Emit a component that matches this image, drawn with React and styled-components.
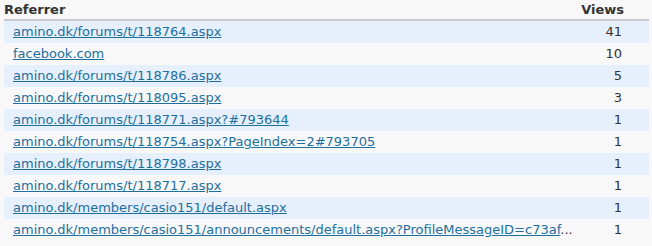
import React from 'react';
import styled, { createGlobalStyle } from 'styled-components';

const GlobalStyle = createGlobalStyle`
  body {
    margin: 0;
    background-color: #f8f8f8;
    font-family: "DejaVu Sans", Verdana, sans-serif;
    font-size: 13px;
    color: #333;
  }
`;

const Wrapper = styled.div`
  padding: 0 3px 0 4px;
`;

const Table = styled.div`
  display: grid;
  grid-template-columns: minmax(0, 1fr) 68px;
`;

const HeadCell = styled.div`
  font-weight: bold;
  color: #333;
  height: 19px;
  line-height: 19px;
  border-bottom: 2px solid #cbcbcb;
  text-align: ${props => (props.right ? 'right' : 'left')};
  padding-right: ${props => (props.right ? '25px' : '0')};
`;

const Cell = styled.div`
  height: 22px;
  line-height: 22px;
  background-color: ${props => (props.striped ? '#e6effc' : 'transparent')};
  text-align: ${props => (props.right ? 'right' : 'left')};
  padding: ${props => (props.right ? '0 27px 0 0' : '0 0 0 9px')};
  white-space: nowrap;
`;

const Link = styled.a`
  color: #1d6fa0;
  text-decoration: underline;
`;

const rows = [
  ['amino.dk/forums/t/118764.aspx', 41],
  ['facebook.com', 10],
  ['amino.dk/forums/t/118786.aspx', 5],
  ['amino.dk/forums/t/118095.aspx', 3],
  ['amino.dk/forums/t/118771.aspx?#793644', 1],
  ['amino.dk/forums/t/118754.aspx?PageIndex=2#793705', 1],
  ['amino.dk/forums/t/118798.aspx', 1],
  ['amino.dk/forums/t/118717.aspx', 1],
  ['amino.dk/members/casio151/default.aspx', 1],
  ['amino.dk/members/casio151/announcements/default.aspx?ProfileMessageID=c73af', 1, true],
];

const App = () => (
  <Wrapper>
    <GlobalStyle />
    <Table>
      <HeadCell>Referrer</HeadCell>
      <HeadCell right>Views</HeadCell>
      {rows.map(([url, views, cut], i) => (
        <React.Fragment key={url}>
          <Cell striped={i % 2 === 0}>
            <Link href="#">{url}</Link>
            {cut && '...'}
          </Cell>
          <Cell striped={i % 2 === 0} right>
            {views}
          </Cell>
        </React.Fragment>
      ))}
    </Table>
  </Wrapper>
);

export default App;
